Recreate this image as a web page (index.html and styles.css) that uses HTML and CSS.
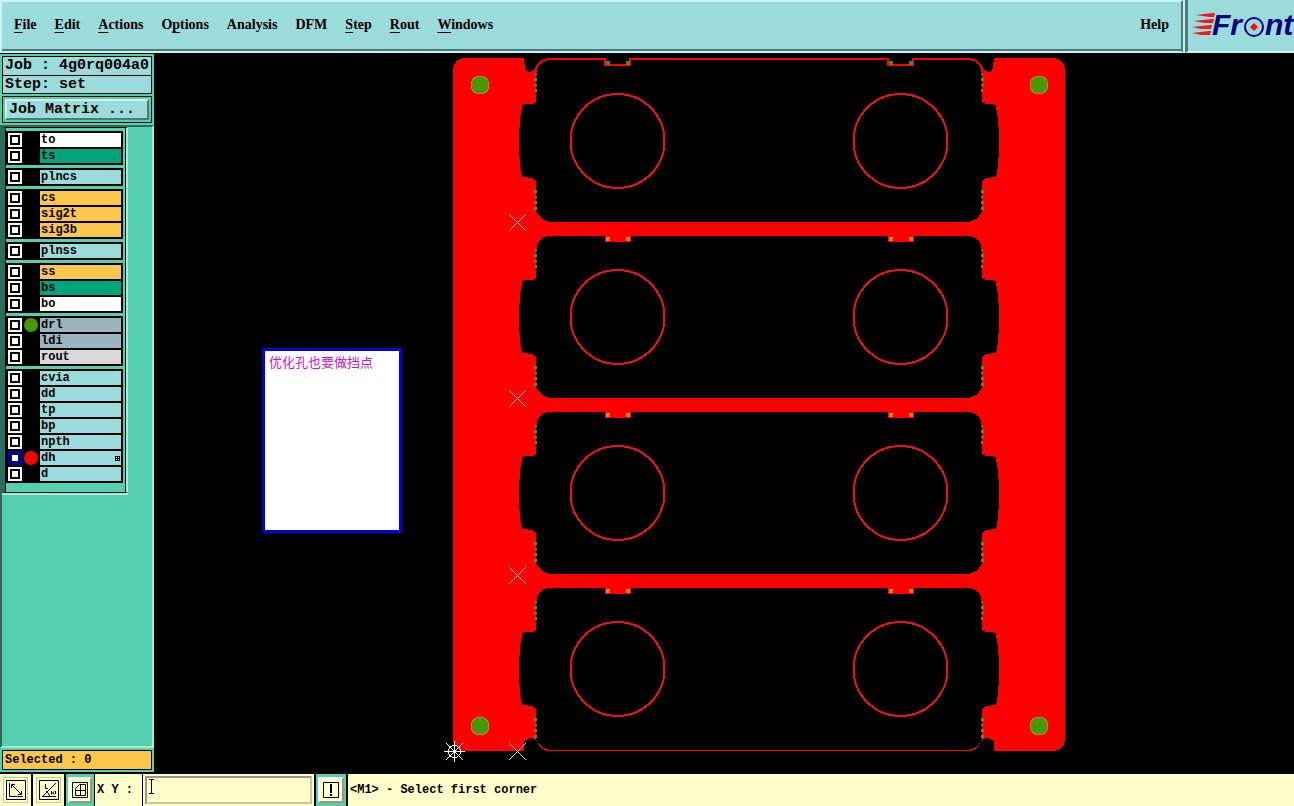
FILE: index.html
```html
<!DOCTYPE html>
<html lang="en">
<head>
    <meta charset="utf-8">
    <title>Graphic Editor</title>
    <link rel="stylesheet" href="styles.css">
</head>
<body>
    <header class="top">
        <nav class="menubar">
            <button class="menu"><u>F</u>ile</button>
            <button class="menu"><u>E</u>dit</button>
            <button class="menu"><u>A</u>ctions</button>
            <button class="menu">O<u>p</u>tions</button>
            <button class="menu">Analysis</button>
            <button class="menu">DFM</button>
            <button class="menu"><u>S</u>tep</button>
            <button class="menu"><u>R</u>out</button>
            <button class="menu"><u>W</u>indows</button>
            <button class="menu help">Help</button>
        </nav>
        <div class="brand">
            <svg class="logo" viewBox="0 0 106 52" width="106" height="52">
                <g fill="#f01818">
                    <path d="M8 15 L25 13 H27 L26 17 H21 Z"/>
                    <path d="M6 21 L24 19 H26 L25 23 H17 Z"/>
                    <path d="M4 27 L23 25 H24 L23 29 H13 Z"/>
                    <path d="M4 33 L21 31 H23 L22 35 H13 Z"/>
                </g>
                <g class="logo-text">
                    <text x="24" y="35">Fr</text>
                    <text x="77" y="35">nt</text>
                </g>
                <circle cx="66" cy="27" r="9" fill="none" stroke="#000080" stroke-width="2"/>
                <path d="M66 23 L70 27 L66 31 L62 27 Z" fill="#f01010"/>
            </svg>
        </div>
    </header>

    <main class="work">
        <aside class="sidebar">
            <div class="job">
                <div class="job-line">Job : 4g0rq004a0</div>
                <div class="job-line">Step: set</div>
            </div>
            <div class="matrix"><button class="matrix-button">Job Matrix ...</button></div>

            <div class="layers-area">
                <div class="layers">
                    <div class="group">
                        <label class="layer white"><input type="checkbox"><i></i><span>to</span></label>
                        <label class="layer green"><input type="checkbox"><i></i><span>ts</span></label>
                    </div>
                    <div class="group">
                        <label class="layer"><input type="checkbox"><i></i><span>plncs</span></label>
                    </div>
                    <div class="group">
                        <label class="layer orange"><input type="checkbox"><i></i><span>cs</span></label>
                        <label class="layer orange"><input type="checkbox"><i></i><span>sig2t</span></label>
                        <label class="layer orange"><input type="checkbox"><i></i><span>sig3b</span></label>
                    </div>
                    <div class="group">
                        <label class="layer"><input type="checkbox"><i></i><span>plnss</span></label>
                    </div>
                    <div class="group">
                        <label class="layer orange"><input type="checkbox"><i></i><span>ss</span></label>
                        <label class="layer green"><input type="checkbox"><i></i><span>bs</span></label>
                        <label class="layer white"><input type="checkbox"><i></i><span>bo</span></label>
                    </div>
                    <div class="group">
                        <label class="layer steel"><input type="checkbox"><i class="dot-green"></i><span>drl</span></label>
                        <label class="layer steel"><input type="checkbox"><i></i><span>ldi</span></label>
                        <label class="layer grey"><input type="checkbox"><i></i><span>rout</span></label>
                    </div>
                    <div class="group">
                        <label class="layer"><input type="checkbox"><i></i><span>cvia</span></label>
                        <label class="layer"><input type="checkbox"><i></i><span>dd</span></label>
                        <label class="layer"><input type="checkbox"><i></i><span>tp</span></label>
                        <label class="layer"><input type="checkbox"><i></i><span>bp</span></label>
                        <label class="layer"><input type="checkbox"><i></i><span>npth</span></label>
                        <label class="layer"><input type="checkbox" checked><i class="dot-red"></i><span>dh
                            <svg class="snap" viewBox="0 0 5 5" width="5" height="5" shape-rendering="crispEdges"><path d="M0 0H5V5H0Z"/><path d="M1 1H2V2H1Z M3 1H4V2H3Z M1 3H2V4H1Z M3 3H4V4H3Z" fill="#d8f0f0"/></svg></span></label>
                        <label class="layer"><input type="checkbox"><i></i><span>d</span></label>
                    </div>
                </div>
            </div>

            <div class="selected">Selected : 0</div>
        </aside>

        <section class="canvas">
            <svg class="board" viewBox="154 54 1140 720" preserveAspectRatio="xMinYMin meet" shape-rendering="crispEdges">
                <defs>
                    <!-- left half of one unit, the right half is mirrored around x=759 -->
                    <g id="half">
                        <path d="M760 60 H550 C541 60 536 66 536 75 V98 Q537 103 532 104 H526 Q522 104 522 107 Q519 122 519 141 Q519 160 521 173 Q521 177 524 177 L531 178 Q536 179 536 184 V211 Q541 222 551 222 H760 Z" fill="#000"/>
                        <circle cx="617.5" cy="141" r="47" fill="none" stroke="#f01010" stroke-width="2"/>
                        <path d="M534 78h3v3h-3z M534 84h3v2h-3z M535 73h2v2h-2z M535 89h2v3h-2z M534 190h3v3h-3z M535 196h2v2h-2z M534 201h3v3h-3z M534 207h3v3h-3z" fill="#6b8a00"/>
                    </g>
                    <g id="unit">
                        <use href="#half"/>
                        <use href="#half" transform="translate(1518 0) scale(-1 1)"/>
                    </g>
                    <g id="tab">
                        <path d="M605 59 H631 V66 H605 Z" fill="#f00"/>
                        <path d="M606 61h4v4h-4z M626 61h4v4h-4z" fill="#df8a14"/>
                    </g>
                    <g id="tab-top">
                        <path d="M604 58 H631 V66 H604 Z" fill="#f00"/>
                        <path d="M606 57 H629 V64 H606 Z" fill="#000"/>
                        <path d="M606 61h4v4h-4z M626 61h4v4h-4z" fill="#4c8a08"/>
                    </g>
                    <g id="pockets">
                        <path d="M524 57 L525 68 Q526 72 530 72 Q534 71 536 66 Q540 59 549 58 V57 Z"/>
                        <path d="M524 752 V742 Q527 738 532 738 Q536 739 539 745 Q543 751 550 751 V752 Z"/>
                    </g>
                    <path id="cross" d="M-8 -8 L9 9 M9 -8 L-8 9"/>
                </defs>

                <rect x="453" y="58" width="612" height="693" rx="12" fill="#f00"/>
                <use href="#unit"/>
                <use href="#unit" y="176"/>
                <use href="#unit" y="352"/>
                <use href="#unit" y="528"/>
                <use href="#pockets"/>
                <use href="#pockets" transform="translate(1518 0) scale(-1 1)"/>

                <use href="#tab-top"/>
                <use href="#tab-top" x="283"/>
                <use href="#tab" y="176"/>
                <use href="#tab" x="283" y="176"/>
                <use href="#tab" y="352"/>
                <use href="#tab" x="283" y="352"/>
                <use href="#tab" y="528"/>
                <use href="#tab" x="283" y="528"/>

                <g fill="#449a00" stroke="#b88a10">
                    <circle cx="480" cy="85" r="9"/>
                    <circle cx="1039" cy="85" r="9"/>
                    <circle cx="480" cy="726" r="9"/>
                    <circle cx="1039" cy="726" r="9"/>
                </g>
                <rect x="476" y="128" width="1" height="1" fill="#444"/>

                <g stroke="#d0d0d0" fill="none">
                    <use href="#cross" x="517" y="222"/>
                    <use href="#cross" x="517" y="398"/>
                    <use href="#cross" x="517" y="575"/>
                    <use href="#cross" x="517" y="751"/>
                </g>

                <!-- datum -->
                <g stroke="#fff" fill="none">
                    <use href="#cross" x="454" y="751"/>
                    <path d="M444 751.5 H465 M454.5 741 V762"/>
                    <circle cx="454.5" cy="751.5" r="6"/>
                </g>
            </svg>
            <div class="note">优化孔也要做挡点</div>
        </section>
    </main>

    <footer class="status">
        <button class="tool" aria-label="Distance">
            <svg viewBox="0 0 20 20" width="20" height="20" fill="none" stroke="#000"><path d="M.5 .5H19.5V19.5H.5Z M3.5 3V16.5H17 M5.5 4.5L15.5 14.5 M5.5 8V4.5H9 M15.5 11V14.5H12"/></svg>
        </button>
        <button class="tool" aria-label="Angle">
            <svg viewBox="0 0 20 20" width="20" height="20" fill="none" stroke="#000"><path d="M.5 .5H19.5V19.5H.5Z M17 3L3.5 16.5H17 M6.5 4V8.5H9 M7 11Q10 13 10.5 16 M12.5 11V14.5 M15.5 11.5L13.5 13L15.5 14.5 M16.5 11V14"/></svg>
        </button>
        <div class="tool-well">
            <button class="tool raised" aria-label="Grid">
                <svg viewBox="0 0 16 16" width="16" height="16" fill="none" stroke="#000"><path d="M.5 .5H15.5V15.5H.5Z M8.5 3V13 M3 8.5H13 M3.5 13.5H13.5V2.5H7.5L3.5 6.5Z"/></svg>
            </button>
        </div>
        <label class="xy-label" for="xy">X Y :</label>
        <div class="xy-box">
            <input class="xy" id="xy" type="text">
            <svg class="caret" viewBox="0 0 5 15" width="5" height="15" fill="none" stroke="#000"><path d="M0 .5H5 M2.5 0V15 M0 14.5H5"/></svg>
        </div>
        <div class="tool-well last">
            <button class="tool raised" aria-label="Messages">
                <svg viewBox="0 0 16 16" width="16" height="16"><path d="M.5 .5H15.5V15.5H.5Z" fill="none" stroke="#000"/><path d="M7 2h2v9h-2z M7 12h2v2h-2z"/></svg>
            </button>
        </div>
        <div class="message">&lt;M1&gt; - Select first corner</div>
    </footer>
</body>
</html>
```
FILE: styles.css
```css
* {
    box-sizing: border-box;
}
body {
    margin: 0;
    height: 100vh;
    display: flex;
    flex-direction: column;
    background-color: #000;
    color: #000;
    font-family: "Liberation Mono", "Courier New", monospace;
    font-size: 12px;
    font-weight: bold;
    overflow: hidden;
}
button {
    font: inherit;
    color: inherit;
    border: 0;
    padding: 0;
    background: none;
}

/* menu bar */
.top {
    display: flex;
    gap: 2px;
    height: 54px;
    background-color: #c8f4f4;
    border-bottom: 1px solid #000;
}
.menubar {
    flex: 1;
    display: flex;
    align-items: center;
    gap: 18px;
    padding: 0 12px 4px;
    background-color: #9bdbdb;
    border: 2px solid #c8f4f4;
    border-right-color: #4c7a7a;
    box-shadow: inset 0 -2px #4c7a7a;
    font-family: "Liberation Serif", "Times New Roman", serif;
    font-size: 14px;
}
.menu u {
    text-underline-offset: 3px;
}
.help {
    margin-left: auto;
}
.brand {
    width: 109px;
    overflow: hidden;
    background-color: #9bdbdb;
    border-left: 3px solid #4c7a7a;
    border-bottom: 2px solid #c8f4f4;
}
.logo-text {
    font: italic bold 30px "Liberation Sans", Arial, sans-serif;
    fill: #000080;
}

/* left panel */
.work {
    flex: 1;
    display: flex;
    min-height: 0;
}
.sidebar {
    width: 154px;
    display: flex;
    flex-direction: column;
    background-color: #54cfb0;
    border-bottom: 2px solid #000;
}
.job {
    margin: 2px 2px 0;
    border: 1px solid #000;
    background-color: #9bdbdb;
    font-size: 15px;
}
.job-line {
    height: 18px;
    line-height: 18px;
    padding-left: 2px;
    white-space: nowrap;
}
.job-line + .job-line {
    border-top: 1px solid #000;
}
.matrix {
    margin: 2px 2px;
    padding: 2px;
    border: 1px solid #000;
}
.matrix-button {
    display: block;
    width: 100%;
    height: 21px;
    padding-left: 2px;
    text-align: left;
    font-size: 15px;
    background-color: #9bdbdb;
    border: 2px solid #c8f4f4;
    border-right-color: #4c7a7a;
    border-bottom-color: #4c7a7a;
}
.layers-area {
    flex: 1;
    border: 2px solid #a8ead8;
    border-left-color: #2c6c5c;
    border-top-color: #2c6c5c;
}
.layers {
    width: 126px;
    display: flex;
    flex-direction: column;
    gap: 3px;
    padding: 3px 3px 9px 1px;
    border: 1px solid #000;
    border-left: 3px solid #2c6c5c;
    border-right: 2px solid #a8ead8;
    box-shadow: inset 1px 0 #000, inset -1px 0 #000, 0 2px #a8ead8;
}
.group {
    padding: 1px 0;
    background-color: #000;
}
.layer {
    display: flex;
    align-items: center;
    height: 16px;
}
.layer input {
    appearance: none;
    width: 14px;
    height: 14px;
    margin: 0 2px;
    background-color: #fff;
    border: 2px solid #fff;
    box-shadow: inset 0 0 0 2px #000;
}
.layer input:checked {
    border-color: #0000a0;
    box-shadow: inset 0 0 0 2px #000070;
}
.layer i {
    width: 14px;
    height: 14px;
    margin-right: 2px;
    border-radius: 50%;
}
.layer .dot-green {
    background-color: #449a00;
}
.layer .dot-red {
    background-color: #f00;
}
.layer span {
    flex: 1;
    display: flex;
    align-items: center;
    justify-content: space-between;
    height: 14px;
    margin-right: 2px;
    padding: 0 1px;
    background-color: #9bdbdb;
}
.white span {
    background-color: #fff;
}
.green span {
    background-color: #00a47c;
}
.orange span {
    background-color: #ffc64c;
}
.steel span {
    background-color: #9ab4c0;
}
.grey span {
    background-color: #d9d9d9;
}
.selected {
    height: 20px;
    margin: 2px;
    padding-left: 2px;
    line-height: 18px;
    border: 1px solid #000;
    background-color: #ffc64c;
}

/* drawing area */
.canvas {
    flex: 1;
    position: relative;
    overflow: hidden;
    background-color: #000;
}
.board {
    display: block;
    width: 100%;
}
.note {
    position: absolute;
    left: 108px;
    top: 294px;
    width: 140px;
    height: 185px;
    padding: 4px;
    border: 3px solid #0000e0;
    background-color: #fff;
    color: #d010d0;
    font: 13px "Noto Sans CJK SC", sans-serif;
    line-height: 14px;
}

/* bottom bar */
.status {
    display: flex;
    height: 32px;
    background-color: #ffffcc;
}
.tool {
    width: 33px;
    display: flex;
    align-items: center;
    justify-content: center;
    border-right: 2px solid #000;
    box-shadow: inset 0 0 0 3px #ffffcc, inset 0 0 0 4px #c8c8a0;
}
.tool-well {
    width: 29px;
    padding: 3px 2px;
    display: flex;
    background-color: #54cfb0;
    border-right: 1px solid #000;
}
.raised {
    flex: 1;
    background-color: #ffffcc;
    border: 2px solid #ffffe8;
    border-right-color: #98987c;
    border-bottom-color: #98987c;
    box-shadow: none;
}
.xy-label {
    width: 47px;
    padding-left: 2px;
    line-height: 32px;
    white-space: nowrap;
}
.xy-box {
    position: relative;
    width: 174px;
    padding: 2px;
    border-left: 1px solid #000;
    border-right: 2px solid #000;
}
.xy {
    width: 100%;
    height: 28px;
    padding: 0 4px;
    font: inherit;
    background-color: #ffffcc;
    border: 2px solid #98987c;
    border-right-color: #c8c8a0;
    border-bottom-color: #c8c8a0;
    outline: 0;
}
.caret {
    position: absolute;
    left: 6px;
    top: 5px;
}
.last {
    width: 32px;
    border-right-width: 2px;
}
.message {
    padding-left: 2px;
    line-height: 32px;
}
```
